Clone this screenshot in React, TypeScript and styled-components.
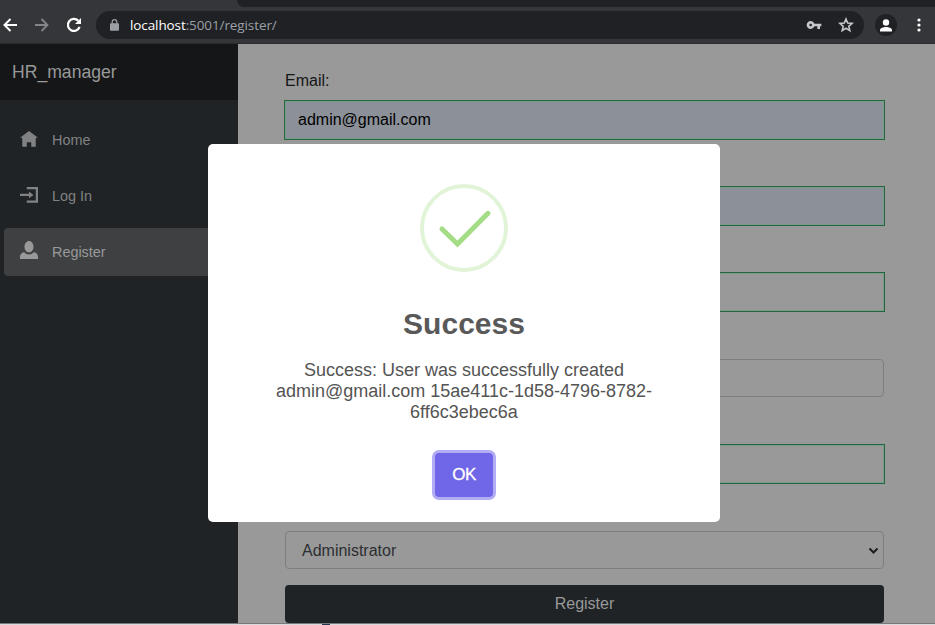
import React from "react";
import styled, { createGlobalStyle, css } from "styled-components";

const GlobalStyle = createGlobalStyle`
  *, *::before, *::after { box-sizing: border-box; }
  body { margin: 0; overflow: hidden; font-family: "Liberation Sans", Arial, sans-serif; }
`;

const Window = styled.div`
  width: 935px;
  height: 625px;
  display: flex;
  flex-direction: column;
  background: #d6d6d6;
  overflow: hidden;
`;

const TabStrip = styled.div`
  flex: none;
  height: 7px;
  display: flex;
  background: #35363a;
`;
const ActiveTabEdge = styled.div`
  width: 237px;
`;
const StripRest = styled.div`
  flex: 1;
  background: #202124;
  border-bottom-left-radius: 7px;
`;

const Toolbar = styled.div`
  flex: none;
  height: 37px;
  display: flex;
  align-items: flex-start;
  padding: 4px 0 0;
  background: #35363a;
  border-bottom: 1px solid #29292b;
`;
const ToolIcon = styled.div<{ $w: number; $color?: string }>`
  flex: none;
  width: ${(p) => p.$w}px;
  height: 28px;
  display: flex;
  align-items: center;
  justify-content: center;
  color: ${(p) => p.$color ?? "#fff"};
  svg { display: block; }
`;
const AddressBar = styled.div`
  flex: none;
  width: 768px;
  height: 28px;
  margin-left: 12px;
  border-radius: 14px;
  background: #202124;
  display: flex;
  align-items: center;
  padding: 0 2px 0 8px;
`;
const Url = styled.div`
  flex: 1;
  padding-left: 6px;
  font: 13.5px/28px "Open Sans", "Noto Sans", sans-serif;
  letter-spacing: -0.1px;
  color: #9aa0a6;
  b { font-weight: 400; color: #fff; }
`;
const Profile = styled.div`
  flex: none;
  width: 22px;
  height: 22px;
  margin: 3px 0 0 11px;
  border-radius: 50%;
  background: #202124;
  display: flex;
  align-items: center;
  justify-content: center;
`;

const Page = styled.div`
  position: relative;
  flex: none;
  height: 579px;
  display: flex;
  background: #999;
`;
const Sidebar = styled.nav`
  width: 238px;
  background: #1f2326;
`;
const Brand = styled.div`
  height: 56px;
  padding-left: 12px;
  background: #141617;
  color: #999;
  font-size: 17.6px;
  line-height: 56px;
`;
const NavList = styled.div`
  display: flex;
  flex-direction: column;
  gap: 8px;
  padding: 16px 4px;
`;
const NavItem = styled.div<{ $active?: boolean }>`
  height: 48px;
  display: flex;
  align-items: center;
  padding-left: 16px;
  border-radius: 4px;
  font-size: 14.4px;
  color: #818283;
  svg { width: 18px; height: 18px; margin: ${(p) => (p.$active ? -4 : 0)}px 14px 0 0; fill: currentColor; }
  ${(p) => p.$active && css`background: #3f4042; color: #999;`}
`;

const Form = styled.div`
  flex: 1;
  padding: 25px 51px 0 47px;
  font-size: 16px;
  line-height: 24px;
  color: #141617;
`;
const Group = styled.div`
  margin-bottom: 16px;
`;
const Label = styled.div`
  height: 24px;
  margin-bottom: 8px;
`;
const Field = styled.div<{ $valid?: boolean; $filled?: boolean }>`
  height: 38px;
  display: flex;
  align-items: center;
  justify-content: space-between;
  padding: 0 4px 0 12px;
  border: 1px solid #7c7f81;
  border-radius: 4px;
  background: ${(p) => (p.$filled ? "#8b9099" : "#999")};
  color: #000;
  ${(p) =>
    p.$valid &&
    css`
      border: 1px solid ${p.$filled ? "#7c9a8c" : "#7c9a8a"};
      border-radius: 0;
      outline: 1px solid #23663f;
    `}
`;
const Select = styled(Field)`
  padding: 2px 4px 0 16px;
  color: #2c2f32;
`;
const Submit = styled.div`
  height: 38px;
  border-radius: 4px;
  background: #1f2326;
  color: #999;
  text-align: center;
  line-height: 37px;
`;

const Overlay = styled.div`
  position: absolute;
  inset: 0;
  padding: 100px 7px 0 0;
  display: flex;
  align-items: flex-start;
  justify-content: center;
`;
const Dialog = styled.div`
  width: 512px;
  height: 378px;
  padding: 40px 60px 0;
  border-radius: 5px;
  background: #fff;
  display: flex;
  flex-direction: column;
  align-items: center;
  color: #545454;
  text-align: center;
`;
const Title = styled.h2`
  margin: 34px 0 0;
  font-size: 30px;
  line-height: 36px;
  font-weight: 700;
  color: #595959;
`;
const Message = styled.div`
  margin-top: 18px;
  font-size: 18px;
  line-height: 21px;
`;
const OkButton = styled.button`
  width: 58px;
  height: 44px;
  margin-top: 30px;
  padding: 0;
  border: 0;
  border-radius: 4px;
  background: #7066e8;
  box-shadow: 0 0 0 3px #b3adf5;
  color: #fff;
  font: 17px "Liberation Sans", Arial, sans-serif;
  letter-spacing: -0.5px;
  -webkit-text-stroke: 0.3px #fff;
`;

const BottomEdge = styled.div`
  flex: none;
  height: 2px;
  display: flex;
  border-top: 1px solid #77787a;
  background: #d9dadb;
`;
const EdgeMark = styled.div`
  width: 8px;
  height: 1px;
  margin-left: 322px;
  background: #26364f;
`;

const navItems = [
  { label: "Home", d: "M4 0l-4 3h1v4h2v-2h2v2h2v-4.03l1 .03-4-3z" },
  { label: "Log In", d: "M3 0v1h4v5h-4v1h5v-7h-5zm1 2v1h-4v1h4v1l2-1.5-2-1.5z" },
  {
    label: "Register",
    active: true,
    d: "M4 0c-1.1 0-2 1.12-2 2.5s.9 2.5 2 2.5 2-1.12 2-2.5-.9-2.5-2-2.5zm-2.09 5c-1.06.05-1.91.92-1.91 2v1h8v-1c0-1.08-.84-1.95-1.91-2-.54.61-1.28 1-2.09 1-.81 0-1.55-.39-2.09-1z",
  },
];

const fields = [
  { label: "Email:", value: "admin@gmail.com", valid: true, filled: true },
  { label: "", value: "", valid: true, filled: true },
  { label: "", value: "", valid: true, filled: false },
  { label: "", value: "", valid: false, filled: false },
  { label: "", value: "", valid: true, filled: false },
];

const Glyph = ({ d, size }: { d: string; size: number }) => (
  <svg width={size} height={size} viewBox="0 0 24 24" fill="currentColor">
    <path d={d} />
  </svg>
);

export default function App() {
  return (
    <Window>
      <GlobalStyle />
      <TabStrip>
        <ActiveTabEdge />
        <StripRest />
      </TabStrip>
      <Toolbar>
        <ToolIcon $w={20}>
          <svg width="14" height="14" viewBox="0 0 14 14" fill="none" stroke="currentColor" strokeWidth="2">
            <path d="M14 7H1.5M7.5 1L1.5 7l6 6" />
          </svg>
        </ToolIcon>
        <ToolIcon $w={44} $color="#85868a">
          <svg width="14" height="14" viewBox="0 0 14 14" fill="none" stroke="currentColor" strokeWidth="1.8">
            <path d="M0 7h12.5M6.5 1l6 6-6 6" />
          </svg>
        </ToolIcon>
        <ToolIcon $w={20}>
          <svg width="16" height="16" viewBox="0 0 16 16">
            <path d="M13.6 9.800A6 6 0 1 1 12.300 3.800" fill="none" stroke="currentColor" strokeWidth="2.200" />
            <path d="M15 1v6H9z" fill="currentColor" />
          </svg>
        </ToolIcon>
        <AddressBar>
          <ToolIcon $w={20} $color="#9aa0a6">
            <svg width="9" height="12" viewBox="0 0 9 12">
              <rect y="4.300" width="9" height="7.400" rx="1" fill="currentColor" />
              <path d="M2.200 5V3a2.300 2.300 0 0 1 4.600 0v2" fill="none" stroke="currentColor" strokeWidth="1.200" />
            </svg>
          </ToolIcon>
          <Url>
            <b>localhost</b>:5001/register/
          </Url>
          <ToolIcon $w={32} $color="#c4c7cb">
            <Glyph size={16} d="M12.650 10A5.990 5.990 0 0 0 7 6c-3.310 0-6 2.690-6 6s2.690 6 6 6a5.990 5.990 0 0 0 5.650-4H17v4h4v-4h2v-4H12.650zM7 14c-1.100 0-2-.900-2-2s.900-2 2-2 2 .900 2 2-.900 2-2 2z" />
          </ToolIcon>
          <ToolIcon $w={32} $color="#c4c7cb">
            <svg width="16" height="16" viewBox="0 0 16 16" fill="none" stroke="currentColor" strokeWidth="1.600">
              <path d="M8 2l1.700 4 4.400.400-3.300 2.900 1 4.300L8 11.300l-3.800 2.300 1-4.300-3.300-2.900 4.400-.400z" />
            </svg>
          </ToolIcon>
        </AddressBar>
        <Profile>
          <svg width="12" height="13" viewBox="0 0 12 13" fill="#fff">
            <circle cx="6" cy="3.500" r="3.200" />
            <path d="M0 12.500v-1.500C0 9 3.500 8 6 8s6 1 6 3v1.500z" />
          </svg>
        </Profile>
        <ToolIcon $w={43}>
          <svg width="4" height="14" viewBox="0 0 4 14" fill="currentColor">
            <circle cx="2" cy="2" r="1.600" />
            <circle cx="2" cy="7" r="1.600" />
            <circle cx="2" cy="12" r="1.600" />
          </svg>
        </ToolIcon>
      </Toolbar>
      <Page>
        <Sidebar>
          <Brand>HR_manager</Brand>
          <NavList>
            {navItems.map((n) => (
              <NavItem key={n.label} $active={n.active}>
                <svg viewBox="0 0 8 8">
                  <path d={n.d} />
                </svg>
                {n.label}
              </NavItem>
            ))}
          </NavList>
        </Sidebar>
        <Form>
          {fields.map((f, i) => (
            <Group key={i}>
              <Label>{f.label}</Label>
              <Field $valid={f.valid} $filled={f.filled}>
                {f.value}
              </Field>
            </Group>
          ))}
          <Group>
            <Label />
            <Select>
              Administrator
              <svg width="11" height="8" viewBox="0 0 11 8" fill="none" stroke="#1b1d1f" strokeWidth="2">
                <path d="M1.500 1.500l4 4 4-4" />
              </svg>
            </Select>
          </Group>
          <Submit>Register</Submit>
        </Form>
        <Overlay>
          <Dialog>
            <svg width="88" height="88" viewBox="0 0 88 88" fill="none">
              <circle cx="44" cy="44" r="42" stroke="#e1f4d7" strokeWidth="4" />
              <path d="M22 45L37.500 60L68 29.300" stroke="#a5dc86" strokeWidth="5" strokeLinecap="round" />
            </svg>
            <Title>Success</Title>
            <Message>
              Success: User was successfully created admin@gmail.com 15ae411c-1d58-4796-8782-6ff6c3ebec6a
            </Message>
            <OkButton>OK</OkButton>
          </Dialog>
        </Overlay>
      </Page>
      <BottomEdge>
        <EdgeMark />
      </BottomEdge>
    </Window>
  );
}
